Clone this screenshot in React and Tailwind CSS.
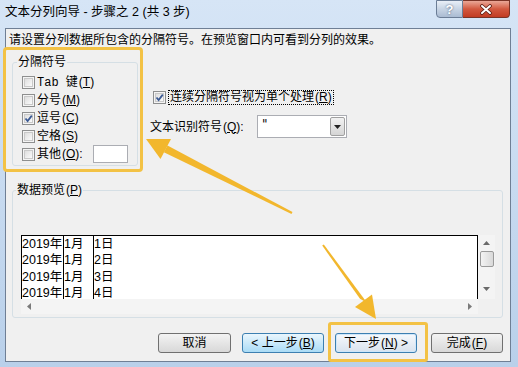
import React from "react";

function Box({ checked }) {
  return (
    <span className="w-[13px] h-[13px] border border-[#8e8f8f] bg-[#f4f4f4] flex items-center justify-center shrink-0">
      <span className="w-[9px] h-[9px] border border-[#c9c9c9] bg-gradient-to-br from-[#dedede] to-[#fbfbfb] relative">
        {checked && (
          <svg width="11" height="11" viewBox="0 0 11 11" className="absolute left-[-2px] top-[-2px]">
            <path d="M2.5 5.5 L4.6 8 L8.8 2.6" fill="none" stroke="#3b5a94" strokeWidth="1.8" />
          </svg>
        )}
      </span>
    </span>
  );
}

function Key({ k }) {
  return (
    <span className="ml-[1px]">
      (<span className="underline">{k}</span>)
    </span>
  );
}

function Row({ checked, children }) {
  return (
    <div className="h-[18px] flex items-center gap-[2px]">
      <Box checked={checked} />
      <span className="leading-[14px] whitespace-nowrap">{children}</span>
    </div>
  );
}

function Btn({ w, variant, children }) {
  const base =
    "h-[20px] rounded-[3px] border flex items-center justify-center text-[12px] leading-[14px] text-black";
  const cls =
    variant === "hover"
      ? "border-[#3c7fb1] bg-gradient-to-b from-[#eaf6fd] to-[#a9dbf6]"
      : variant === "focus"
      ? "border-[#3c7fb1] bg-gradient-to-b from-[#f6f9fc] to-[#d9e3ee] shadow-[inset_0_0_0_1px_#cfe7fa]"
      : "border-[#707070] bg-gradient-to-b from-[#f3f3f3] to-[#d8d8d8]";
  return (
    <div className={`${base} ${cls}`} style={{ width: w }}>
      {children}
    </div>
  );
}

export default function App() {
  const rows = [1, 2, 3, 4];
  return (
    <div className="w-[518px] h-[367px] relative overflow-hidden bg-gradient-to-b from-[#d6e5f6] to-[#b9d0ea] text-[12px] text-black font-['Liberation_Sans','Noto_Sans_CJK_SC',sans-serif]">
      {/* title bar */}
      <div className="h-[28px] flex items-start justify-between pl-[5px] pr-[8px]">
        <div className="pt-[5px] text-[12.5px] leading-[14px] text-black">
          文本分列向导 - 步骤之 2 (共 3 步)
        </div>
        <div className="flex">
          <div className="w-[27px] h-[18px] rounded-bl-[4px] border border-[#6b7d96] bg-gradient-to-b from-[#e9eff7] via-[#c7d4e4] to-[#aabbd2] flex items-center justify-center text-white font-bold text-[13px] leading-[13px] [text-shadow:0_0_2px_#3d4f6a]">
            ?
          </div>
          <div className="w-[47px] h-[18px] rounded-br-[4px] border border-l-0 border-[#7a3326] bg-gradient-to-b from-[#e9a797] via-[#d2583f] to-[#c23b22] flex items-center justify-center">
            <svg width="14" height="11" viewBox="0 0 14 11">
              <path d="M3 2 L11 9 M11 2 L3 9" stroke="#5a1c12" strokeWidth="3.6" strokeLinecap="round" />
              <path d="M3 2 L11 9 M11 2 L3 9" stroke="#ffffff" strokeWidth="2" strokeLinecap="round" />
            </svg>
          </div>
        </div>
      </div>

      {/* client area */}
      <div className="ml-[5px] w-[506px] h-[334px] border border-[#6f7f95] bg-[#f0f0f0] flex flex-col">
        <div className="mt-[4px] pl-[3px] h-[14px] leading-[14px] whitespace-nowrap">
          请设置分列数据所包含的分隔符号。在预览窗口内可看到分列的效果。
        </div>

        <div className="flex items-start mt-[8px]">
          <fieldset className="ml-[6px] w-[126px] border border-[#d5dfe5] rounded-[3px] px-[9px] pt-[4px] pb-[2px]">
            <legend className="ml-[-5px] px-[1px] h-[14px] leading-[14px]">分隔符号</legend>
            <Row>
              <span className="font-['Liberation_Mono','Noto_Sans_CJK_SC',monospace] text-[12px]">Tab 键</span>
              <Key k="T" />
            </Row>
            <Row>
              分号<Key k="M" />
            </Row>
            <Row checked>
              逗号<Key k="C" />
            </Row>
            <Row>
              空格<Key k="S" />
            </Row>
            <div className="h-[18px] flex items-center">
              <div className="flex items-center gap-[2px]">
                <Box />
                <span className="leading-[14px] whitespace-nowrap">
                  其他<Key k="O" />:
                </span>
              </div>
              <div className="ml-auto w-[35px] h-[18px] border border-[#abadb3] bg-white" />
            </div>
          </fieldset>

          <div className="ml-[12px] flex flex-col">
            <div className="mt-[34px] ml-[3px] h-[16px] flex items-center gap-[2px]">
              <Box checked />
              <span className="h-[15px] leading-[13px] border border-dotted border-black px-[1px] whitespace-nowrap">
                连续分隔符号视为单个处理<Key k="R" />
              </span>
            </div>
            <div className="mt-[10px] flex items-center">
              <span className="w-[107px] leading-[14px] whitespace-nowrap">
                文本识别符号<Key k="Q" />:
              </span>
              <div className="w-[90px] h-[23px] border border-[#abadb3] bg-white flex items-stretch">
                <span className="flex-1 pl-[4px] pt-[1px] text-[12px] leading-[14px] text-black font-['DejaVu_Sans',sans-serif]">&quot;</span>
                <div className="w-[15px] my-[1px] mr-[1px] border border-[#a0a0a0] rounded-[2px] bg-gradient-to-b from-[#f2f2f2] to-[#d5d5d5] flex items-center justify-center">
                  <svg width="7" height="4" viewBox="0 0 7 4">
                    <path d="M0 0 H7 L3.5 4 Z" fill="#222" />
                  </svg>
                </div>
              </div>
            </div>
          </div>
        </div>

        <fieldset className="mt-[17px] ml-[6px] w-[491px] border border-[#d5dfe5] rounded-[3px] pl-[8px] pr-[7px] pt-[38px] pb-[3px]">
          <legend className="ml-[-5px] px-[1px] h-[14px] leading-[14px]">
            数据预览<Key k="P" />
          </legend>
          <div className="flex h-[79px]">
            <div className="w-[457px] flex flex-col">
              <div className="h-[64px] border-t border-l border-r border-black bg-white flex overflow-hidden text-[12.5px] leading-[16.4px]">
                <div className="w-[42px] border-r border-black">
                  {rows.map((r) => (
                    <div key={r} className="whitespace-nowrap">2019年</div>
                  ))}
                </div>
                <div className="w-[30px] border-r border-black">
                  {rows.map((r) => (
                    <div key={r} className="whitespace-nowrap">1月</div>
                  ))}
                </div>
                <div className="flex-1">
                  {rows.map((r) => (
                    <div key={r} className="whitespace-nowrap">{r}日</div>
                  ))}
                </div>
              </div>
              <div className="h-[15px] bg-[#f4f4f4] flex items-center justify-between px-[6px]">
                <svg width="4" height="7" viewBox="0 0 4 7">
                  <path d="M4 0 V7 L0 3.5 Z" fill="#7a7a7a" />
                </svg>
                <svg width="4" height="7" viewBox="0 0 4 7">
                  <path d="M0 0 V7 L4 3.5 Z" fill="#7a7a7a" />
                </svg>
              </div>
            </div>
            <div className="w-[17px] h-[64px] bg-[#f4f4f4] flex flex-col items-center">
              <svg width="7" height="4" viewBox="0 0 7 4" className="mt-[6px]">
                <path d="M0 4 H7 L3.5 0 Z" fill="#6a6a6a" />
              </svg>
              <div className="mt-[6px] w-[14px] h-[16px] rounded-[2px] border border-[#9a9a9a] bg-gradient-to-r from-[#f3f3f3] to-[#d9d9d9]" />
              <svg width="7" height="4" viewBox="0 0 7 4" className="mt-[20px]">
                <path d="M0 0 H7 L3.5 4 Z" fill="#6a6a6a" />
              </svg>
            </div>
          </div>
        </fieldset>

        <div className="mt-[15px] flex justify-end pr-[7px] gap-[11px]">
          <Btn w={73}>取消</Btn>
          <Btn w={82} variant="hover">
            &lt; 上一步<Key k="B" />
          </Btn>
          <Btn w={82} variant="focus">
            下一步<Key k="N" />&nbsp;&gt;
          </Btn>
          <div className="ml-[3px]">
            <Btn w={72}>
              完成<Key k="F" />
            </Btn>
          </div>
        </div>
      </div>

      {/* annotation overlays */}
      <div className="absolute left-[3px] top-[47px] w-[140px] h-[125px] border-[3px] border-[#f3c245] rounded-[4px] pointer-events-none" />
      <div className="absolute left-[328px] top-[322px] w-[100px] h-[40px] border-[3px] border-[#f3c245] rounded-[3px] pointer-events-none" />
      <svg className="absolute left-0 top-0 pointer-events-none" width="518" height="367" viewBox="0 0 518 367">
        <polygon points="291.5,213.9 292.5,212.1 167.5,145.5 163.8,152.3" fill="#f2b72d" />
        <polygon points="146,139 171,139 160.5,159" fill="#f2b72d" />
        <polygon points="322.2,245.6 323.8,244.4 367,302.8 360,298.8" fill="#f2b72d" />
        <polygon points="376,319 355,307 372,294.5" fill="#f2b72d" />
      </svg>
    </div>
  );
}
